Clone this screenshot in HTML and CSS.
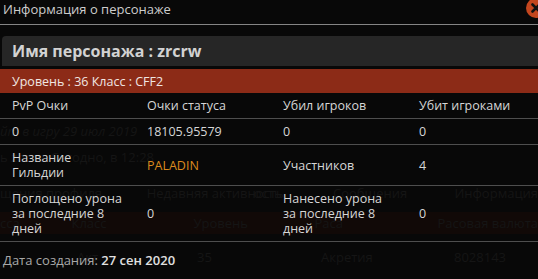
FILE: index.html
```html
<!DOCTYPE html>
<html lang="ru">
<head>
<meta charset="utf-8">
<link rel="stylesheet" href="styles.css">
</head>
<body>
<div class="page">
  <div class="bg-row r1"><span class="it">йт в игру 29 июл 2019</span></div>
  <div class="bg-row r2"><span>ь zrcrw. Сегодно, в 12:28</span></div>
  <div class="bg-row r3"><span class="c1">щения профиля</span><span class="c2">Недавняя активность</span><span class="c3">ость</span><span class="c4">Сообщения</span><span class="c5">Информация</span></div>
  <div class="bg-bar"><span class="b1">сса</span><span class="b2">Класс</span><span class="b3">Уровень</span><span class="b4">Раса</span><span class="b5">Расовая валюта</span></div>
  <div class="bg-row r5"><span class="d1">Акт</span><span class="d2">35</span><span class="d3">Акретия</span><span class="d4">8028143</span></div>
</div>

<div class="modal">
  <div class="modal-head">
    <span class="modal-title">Информация о персонаже</span>
    <span class="close" aria-label="close">
      <svg viewBox="0 0 20 20" width="20" height="20"><circle cx="10" cy="10" r="10" fill="#c4461e"/><path d="M6.5 6.5 L13.5 13.5 M13.5 6.5 L6.5 13.5" stroke="#111" stroke-width="2.6" stroke-linecap="round"/></svg>
    </span>
  </div>
  <div class="name-box">Имя персонажа : zrcrw</div>
  <div class="level-bar">Уровень : 36 Класс : CFF2</div>
  <div class="stats">
    <div class="cell">PvP Очки</div>
    <div class="cell">Очки статуса</div>
    <div class="cell">Убил игроков</div>
    <div class="cell">Убит игроками</div>

    <div class="cell">0</div>
    <div class="cell">18105.95579</div>
    <div class="cell">0</div>
    <div class="cell">0</div>

    <div class="cell">Название<br>Гильдии</div>
    <div class="cell mid guild">PALADIN</div>
    <div class="cell mid">Участников</div>
    <div class="cell mid">4</div>

    <div class="cell">Поглощено урона<br>за последние 8<br>дней</div>
    <div class="cell mid">0</div>
    <div class="cell">Нанесено урона<br>за последние 8<br>дней</div>
    <div class="cell mid">0</div>
  </div>
  <div class="created"><span class="label">Дата создания:</span> <span class="value">27 сен 2020</span></div>
</div>
</body>
</html>
```

FILE: styles.css
```css
html, body {
  margin: 0;
  padding: 0;
}
body {
  width: 538px;
  height: 279px;
  overflow: hidden;
  position: relative;
  background: #080808;
  font-family: "Open Sans", "Noto Sans", sans-serif;
  color: #d4d4d4;
}

/* faint page behind the dialog */
.page {
  color: #151515;
  font-size: 13px;
  line-height: 16px;
  padding-top: 123px;
}
.bg-row {
  display: flex;
  white-space: nowrap;
}
.it { font-style: italic; }
.r2 { margin-top: 10px; }
.r3 { margin-top: 20px; }
.r3 .c1 { width: 163px; }
.r3 .c2 { width: 107px; }
.r3 .c3 { width: 88px; }
.r3 .c4 { width: 135px; }
.bg-bar {
  margin-top: 11px;
  height: 22px;
  background: #110907;
  display: flex;
  align-items: center;
  white-space: nowrap;
}
.bg-bar .b1 { width: 75px; }
.bg-bar .b2 { width: 128px; }
.bg-bar .b3 { width: 127px; }
.bg-bar .b4 { width: 129px; }
.r5 { margin-top: 15px; }
.r5 .d1 { width: 120px; padding-left: 77px; }
.r5 .d2 { width: 124px; }
.r5 .d3 { width: 133px; }

/* dialog */
.modal {
  position: absolute;
  inset: 0;
}
.modal-head {
  position: relative;
  height: 24px;
  border-bottom: 1px solid #858585;
  display: flex;
  align-items: center;
}
.modal-title {
  padding-left: 3px;
  font-size: 13px;
  color: #cdcdcd;
  margin-top: -6px;
}
.close {
  position: absolute;
  right: -8px;
  top: -2px;
  width: 20px;
  height: 20px;
}
.close svg { display: block; }

.name-box {
  margin: 11px 0 0 2px;
  height: 30px;
  background: #262626;
  border-radius: 4px 0 0 0;
  padding-left: 10px;
  font-size: 16px;
  font-weight: 700;
  color: #d2d2d2;
  display: flex;
  align-items: center;
}
.level-bar {
  margin-top: 3px;
  height: 24px;
  background: #8c2b17;
  padding-left: 12px;
  font-size: 12.5px;
  color: #f0e6e2;
  display: flex;
  align-items: center;
}

.stats {
  display: grid;
  grid-template-columns: 135px 136px 136px 1fr;
}
.cell {
  padding: 5px 0 5px 12px;
  line-height: 15px;
  font-size: 12.5px;
  color: #d6d6d6;
  border-bottom: 1px solid #4e4e4e;
}
.mid {
  display: flex;
  align-items: center;
}
.guild { color: #dc8a1e; }

.created {
  padding: 9px 0 0 3px;
  font-size: 13px;
}
.created .label { color: #a8a8a8; }
.created .value { color: #e0e0e0; font-weight: 600; }
```
